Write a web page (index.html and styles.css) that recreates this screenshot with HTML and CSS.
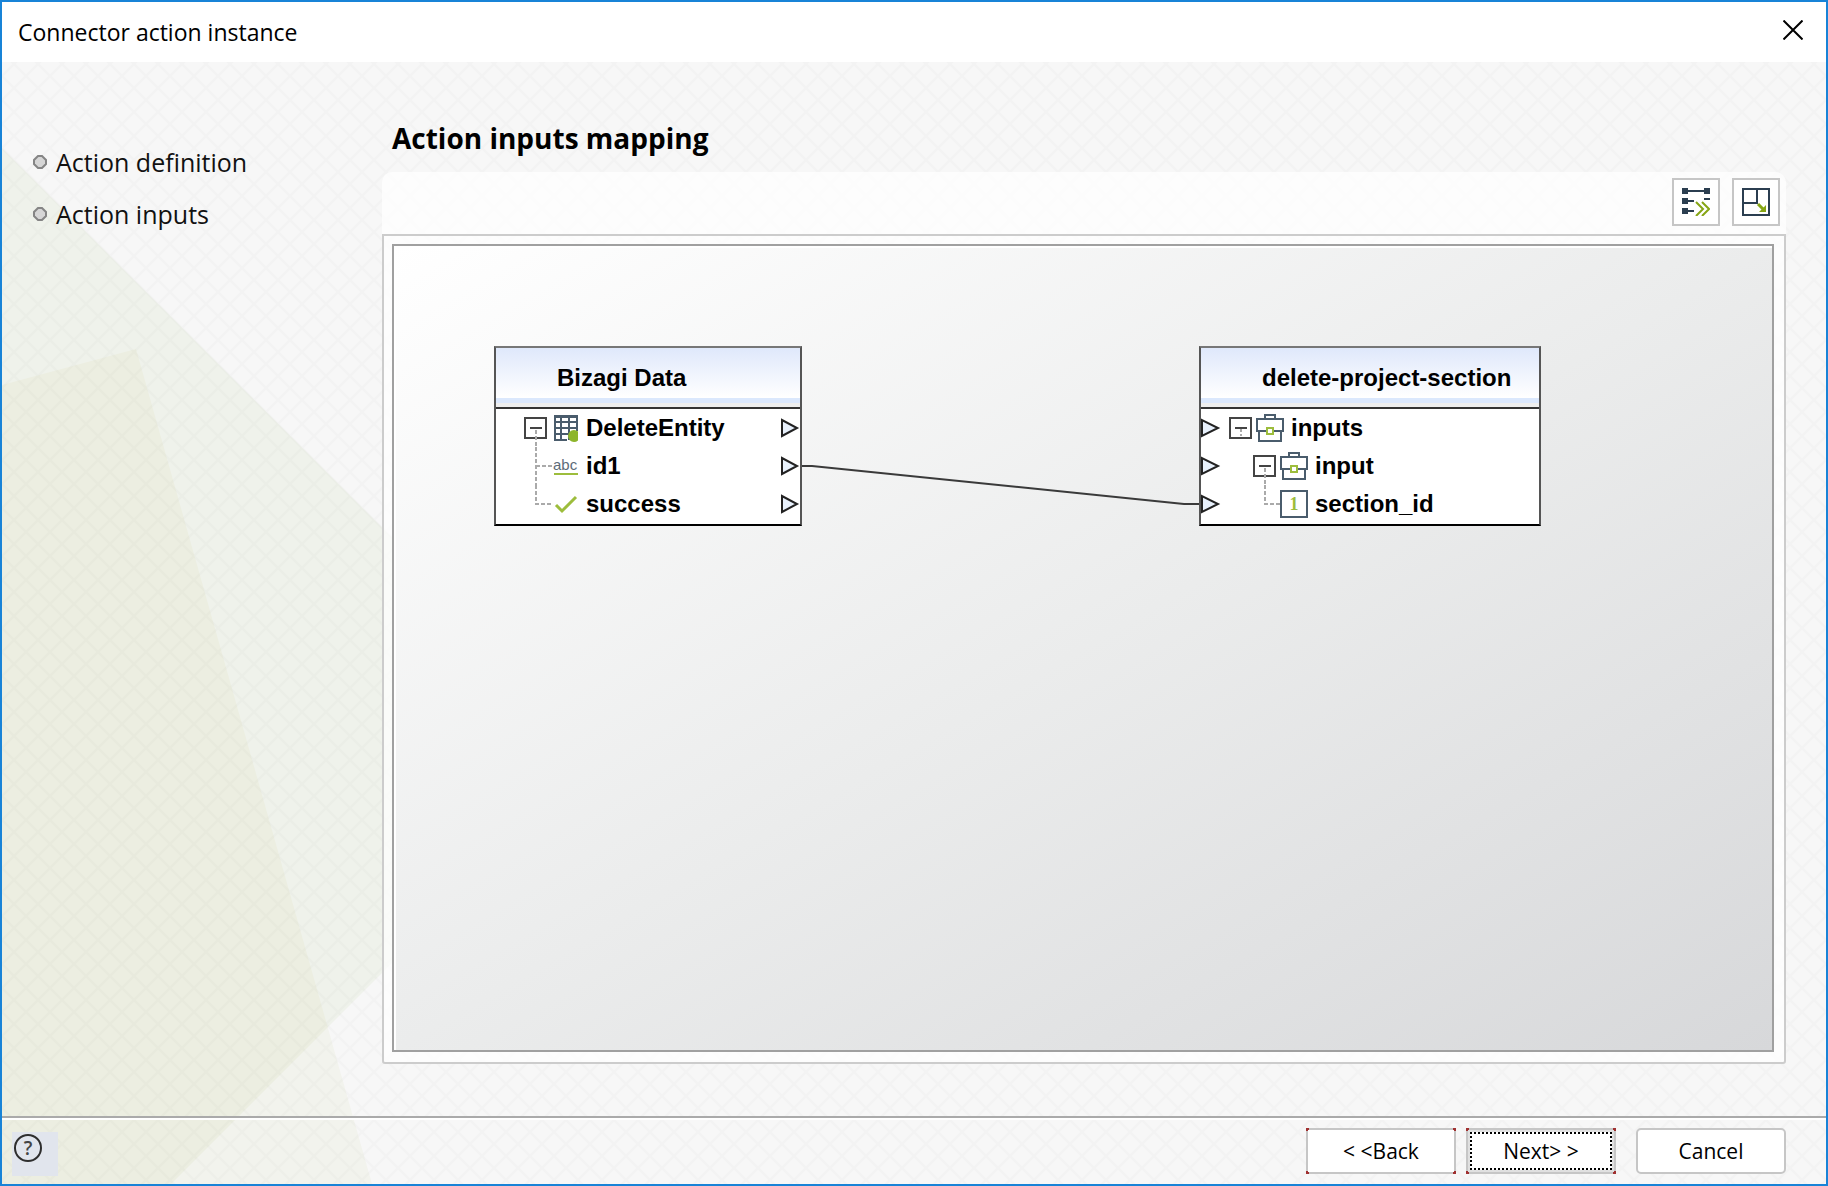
FILE: index.html
```html
<!DOCTYPE html>
<html lang="en">
<head>
<meta charset="utf-8">
<title>Connector action instance</title>
<link rel="stylesheet" href="styles.css">
</head>
<body>
<div class="dialog">
  <header class="titlebar">
    <h1 class="titlebar-text">Connector action instance</h1>
    <button class="close" type="button" aria-label="Close">
      <svg width="20" height="20" viewBox="0 0 20 20"><path d="M0.500 0.500L19.500 19.500M19.500 0.500L0.500 19.500" stroke="#000" stroke-width="2" fill="none"/></svg>
    </button>
  </header>

  <div class="surface">
    <svg class="backdrop" aria-hidden="true">
      <defs>
        <pattern id="mesh" width="24" height="24" patternUnits="userSpaceOnUse" x="12" y="2">
          <path d="M-1 -1L25 25M25 -1L-1 25" stroke="#000" stroke-opacity="0.014" stroke-width="2"/>
        </pattern>
        <clipPath id="leaf"><path d="M0 86L603 688L169 1122H0Z"/></clipPath>
      </defs>
      <path d="M0 323L134 287L370 1122H0Z" fill="#f2f3ed"/>
      <path d="M0 86L603 688L169 1122H0Z" fill="#eff2eb"/>
      <path d="M0 323L134 287L370 1122H0Z" fill="#eceee1" clip-path="url(#leaf)"/>
      <rect width="100%" height="100%" fill="url(#mesh)"/>
    </svg>

    <div class="content">
      <nav class="steps" aria-label="Steps">
        <a class="step" href="#definition"><svg class="bullet" width="16" height="16" viewBox="0 0 16 16"><path d="M6 2H10L14 6V10L10 14H6L2 10V6Z" fill="#d6d6d6" stroke="#858585" stroke-width="2"/></svg>Action definition</a>
        <a class="step" href="#inputs"><svg class="bullet" width="16" height="16" viewBox="0 0 16 16"><path d="M6 2H10L14 6V10L10 14H6L2 10V6Z" fill="#d6d6d6" stroke="#858585" stroke-width="2"/></svg>Action inputs</a>
      </nav>

      <main class="main">
        <h2 class="heading">Action inputs mapping</h2>
        <div class="toolbar">
          <button class="tool" type="button" aria-label="Auto map">
            <svg width="28" height="28" viewBox="0 0 28 28"><g fill="#2b3e50"><path d="M0 0h6v6H0zM22 0h6v6h-6zM0 10h6v6H0zM0 20h6v6H0z"/><path d="M6 2h16v2H6zM6 12h6v2H6zM6 22h6v2H6zM22 10h6v2h-6z"/></g><path d="M14 14L21 21L14 28M20 14L27 21L20 28" fill="none" stroke="#86a514" stroke-width="2"/></svg>
          </button>
          <button class="tool" type="button" aria-label="Fit layout">
            <svg width="28" height="28" viewBox="0 0 28 28"><path d="M1 1H27V27H1ZM15 1V15H1" fill="none" stroke="#2b3e50" stroke-width="2"/><path d="M16 16L22 22" stroke="#86a514" stroke-width="3"/><path d="M24 17V24H17Z" fill="#86a514"/></svg>
          </button>
        </div>
        <div class="panel">
          <div class="canvas">
            <svg class="links" aria-hidden="true"><path d="M406 220H418L790 258H806" fill="none" stroke="#3a3a3a" stroke-width="2"/></svg>

            <section class="node source">
              <h3 class="node-title">Bizagi Data</h3>
              <ul class="rows">
                <li class="row">
                  <svg class="tree" width="54" height="38" viewBox="0 0 54 38"><path d="M1 9H22V29H1Z" fill="#fff" stroke="#444" stroke-width="2"/><path d="M6 19H18" stroke="#444" stroke-width="2"/><path d="M12 21V38" stroke="#aaa" stroke-width="2" stroke-dasharray="4 2"/><g fill="none" stroke="#4a5c6c" stroke-width="2"><path d="M30 7H53M31 6V31M37 6V31M45 6V31M53 6V22M30 13H54M30 19H54M30 25H45M30 31H43"/></g><path d="M30 6H54V9H30Z" fill="#4a5c6c"/><circle cx="50" cy="27" r="6" fill="#8db52b"/></svg>
                  <span>DeleteEntity</span>
                  <svg class="port" width="20" height="20" viewBox="0 0 20 20"><path d="M2 2V18L17 10Z" fill="#e8f1fc" stroke="#222" stroke-width="2"/></svg>
                </li>
                <li class="row">
                  <svg class="tree" width="54" height="38" viewBox="0 0 54 38"><path d="M12 0V38M12 19H28" stroke="#aaa" stroke-width="2" stroke-dasharray="4 2"/><text x="29" y="23" class="abc">abc</text><path d="M30 27H54" stroke="#9dbd3c" stroke-width="2"/></svg>
                  <span>id1</span>
                  <svg class="port" width="20" height="20" viewBox="0 0 20 20"><path d="M2 2V18L17 10Z" fill="#e8f1fc" stroke="#222" stroke-width="2"/></svg>
                </li>
                <li class="row">
                  <svg class="tree" width="54" height="38" viewBox="0 0 54 38"><path d="M12 0V19H28" fill="none" stroke="#aaa" stroke-width="2" stroke-dasharray="4 2"/><path d="M32 20L38 26L52 12" fill="none" stroke="#9dbd3c" stroke-width="3"/></svg>
                  <span>success</span>
                  <svg class="port" width="20" height="20" viewBox="0 0 20 20"><path d="M2 2V18L17 10Z" fill="#e8f1fc" stroke="#222" stroke-width="2"/></svg>
                </li>
              </ul>
            </section>

            <section class="node target">
              <h3 class="node-title">delete-project-section</h3>
              <ul class="rows">
                <li class="row">
                  <svg class="port" width="20" height="20" viewBox="0 0 20 20"><path d="M1 2V18L17 10Z" fill="#e8f1fc" stroke="#222" stroke-width="2"/></svg>
                  <svg class="tree" width="56" height="38" viewBox="0 0 56 38"><path d="M1 9H22V29H1Z" fill="#fff" stroke="#444" stroke-width="2"/><path d="M6 19H18" stroke="#444" stroke-width="2"/><path d="M12 20V27" stroke="#aaa" stroke-width="2" stroke-dasharray="3 2"/><g fill="none" stroke="#4a5c6c" stroke-width="2"><path d="M28 10H54V22H28ZM30 22V32H52V22"/><path d="M36 10V6H46V10"/></g><path d="M38 19H44V25H38Z" fill="#fff" stroke="#9dbd3c" stroke-width="2"/></svg>
                  <span>inputs</span>
                </li>
                <li class="row nested">
                  <svg class="port" width="20" height="20" viewBox="0 0 20 20"><path d="M1 2V18L17 10Z" fill="#e8f1fc" stroke="#222" stroke-width="2"/></svg>
                  <svg class="tree" width="56" height="38" viewBox="0 0 56 38"><path d="M1 9H22V29H1Z" fill="#fff" stroke="#444" stroke-width="2"/><path d="M6 19H18" stroke="#444" stroke-width="2"/><path d="M12 21V38" stroke="#aaa" stroke-width="2" stroke-dasharray="4 2"/><g fill="none" stroke="#4a5c6c" stroke-width="2"><path d="M28 10H54V22H28ZM30 22V32H52V22"/><path d="M36 10V6H46V10"/></g><path d="M38 19H44V25H38Z" fill="#fff" stroke="#9dbd3c" stroke-width="2"/></svg>
                  <span>input</span>
                </li>
                <li class="row nested">
                  <svg class="port" width="20" height="20" viewBox="0 0 20 20"><path d="M1 2V18L17 10Z" fill="#e8f1fc" stroke="#222" stroke-width="2"/></svg>
                  <svg class="tree" width="56" height="38" viewBox="0 0 56 38"><path d="M12 0V19H27" fill="none" stroke="#aaa" stroke-width="2" stroke-dasharray="4 2"/><path d="M28 6H54V32H28Z" fill="#fff" stroke="#4a5c6c" stroke-width="2"/><text x="41" y="25" text-anchor="middle" class="one">1</text></svg>
                  <span>section_id</span>
                </li>
              </ul>
            </section>
          </div>
        </div>
      </main>
    </div>

    <footer class="footer">
      <button class="help" type="button" aria-label="Help">
        <svg width="30" height="30" viewBox="0 0 30 30"><circle cx="15" cy="15" r="13" fill="none" stroke="#2e2e2e" stroke-width="2"/><text x="15" y="22" text-anchor="middle" class="mark">?</text></svg>
      </button>
      <div class="actions">
        <button class="btn marked" type="button">&lt; &lt;Back</button>
        <button class="btn marked focused" type="button"><span class="focus-ring">Next&gt; &gt;</span></button>
        <button class="btn cancel" type="button">Cancel</button>
      </div>
    </footer>
  </div>
</div>
</body>
</html>
```
FILE: styles.css
```css
* { box-sizing: border-box; }

body {
  margin: 0;
  font-family: "Open Sans", "Noto Sans", sans-serif;
  color: #000;
}

button { font: inherit; color: inherit; padding: 0; }

.dialog {
  display: flex;
  flex-direction: column;
  min-height: 100vh;
  border: 2px solid #1883d7;
}

.titlebar {
  display: flex;
  align-items: center;
  justify-content: space-between;
  height: 60px;
  padding: 0 23px 0 16px;
  background: #fff;
}

.titlebar-text {
  margin: 0;
  font-size: 23px;
  font-weight: 400;
  line-height: 30px;
}

.close {
  display: flex;
  margin-bottom: 4px;
  border: 0;
  background: none;
}

.surface {
  position: relative;
  display: flex;
  flex: 1;
  flex-direction: column;
  background: #f7f7f7;
}

.backdrop {
  position: absolute;
  inset: 0;
  width: 100%;
  height: 100%;
}

.content {
  position: relative;
  display: flex;
  flex: 1;
}

.steps {
  display: flex;
  flex: none;
  flex-direction: column;
  gap: 20px;
  width: 380px;
  padding: 84px 0 0 30px;
}

.step {
  display: flex;
  align-items: center;
  gap: 8px;
  font-size: 25px;
  line-height: 32px;
  color: #111;
  text-decoration: none;
}

.main {
  display: flex;
  flex: 1;
  flex-direction: column;
  padding: 56px 40px 52px 0;
}

.heading {
  margin: 0 0 14px;
  padding-left: 10px;
  font-size: 28px;
  line-height: 40px;
}

.toolbar {
  display: flex;
  justify-content: flex-end;
  gap: 12px;
  padding: 6px 6px 8px;
  border-radius: 10px 10px 0 0;
  background: rgb(255 255 255 / 70%);
}

.tool {
  display: grid;
  place-items: center;
  width: 48px;
  height: 48px;
  border: 2px solid #c6c6c6;
  background: #fff;
}

.panel {
  display: flex;
  flex: 1;
  padding: 8px 10px 10px 8px;
  border: 2px solid #ccc;
  border-radius: 0 0 3px 3px;
  background: rgb(255 255 255 / 70%);
}

.canvas {
  position: relative;
  flex: 1;
  border: 2px solid #a0a0a0;
  background: linear-gradient(to bottom right, #fff 0%, #ebecec 50%, #d7d8da 100%);
  box-shadow: inset 2px 2px #fff;
}

.links {
  position: absolute;
  inset: 0;
  width: 100%;
  height: 100%;
}

.node {
  position: absolute;
  top: 100px;
  border: 2px solid #555;
  border-top-color: #777;
  border-bottom-color: #000;
  background: #fff;
  font-family: "Liberation Sans", Arial, sans-serif;
  font-size: 24px;
  font-weight: 700;
}

.source { left: 100px; width: 308px; }
.target { left: 805px; width: 342px; }

.node-title {
  margin: 0;
  padding: 15px 0 14px 61px;
  border-bottom: 2px solid #333;
  background: linear-gradient(#dfe8fb, #fff 84%, #dbe8fd 84%, #dbe8fd 94%, #eee 94%);
  font-size: 24px;
  line-height: 30px;
}

.rows {
  margin: 0;
  padding: 0 0 1px;
  list-style: none;
}

.row {
  display: flex;
  align-items: center;
  height: 38px;
}

.tree { flex: none; margin-right: 8px; }
.source .row { padding-left: 28px; }
.source .port { margin-left: auto; }
.target .tree { margin: 0 6px 0 8px; }
.target .nested .tree { margin-left: 32px; }

.abc {
  font-family: "Liberation Sans", Arial, sans-serif;
  font-size: 15px;
  font-weight: 400;
  fill: #5d6b78;
}

.one {
  font-family: "Liberation Serif", serif;
  font-size: 18px;
  font-weight: 700;
  fill: #9dbd3c;
}

.footer {
  position: relative;
  display: flex;
  align-items: flex-start;
  justify-content: space-between;
  height: 68px;
  padding: 8px 40px 0 10px;
  border-top: 2px solid #aaa;
  box-shadow: inset 0 2px #fff;
}

.help {
  display: flex;
  width: 46px;
  height: 44px;
  margin-top: 6px;
  padding: 1px;
  border: 0;
  background: #e1e5ed;
}

.mark {
  font-size: 19px;
  font-weight: 600;
  fill: #444;
}

.actions {
  display: flex;
  gap: 10px;
  padding-top: 2px;
}

.btn {
  width: 150px;
  height: 46px;
  border: 2px solid #c6c6c6;
  border-radius: 5px;
  background: #fff;
  font-size: 21px;
  line-height: 30px;
}

.cancel { margin-left: 10px; }

/* Small red marks in the four corners of the navigation buttons */
.marked {
  border-color: transparent;
  border-radius: 0;
  background:
    linear-gradient(#fff, #fff) padding-box,
    linear-gradient(#a03030, #a03030) 0 0 / 3px 3px no-repeat border-box,
    linear-gradient(#a03030, #a03030) 100% 0 / 3px 3px no-repeat border-box,
    linear-gradient(#a03030, #a03030) 0 100% / 3px 3px no-repeat border-box,
    linear-gradient(#a03030, #a03030) 100% 100% / 3px 3px no-repeat border-box,
    linear-gradient(#c6c6c6, #c6c6c6) border-box;
}

.focused {
  padding: 2px;
  box-shadow: inset 0 0 0 2px #e0e0e0;
}

.focus-ring {
  display: grid;
  place-items: center;
  height: 100%;
  border: 2px dotted #000;
}
```
